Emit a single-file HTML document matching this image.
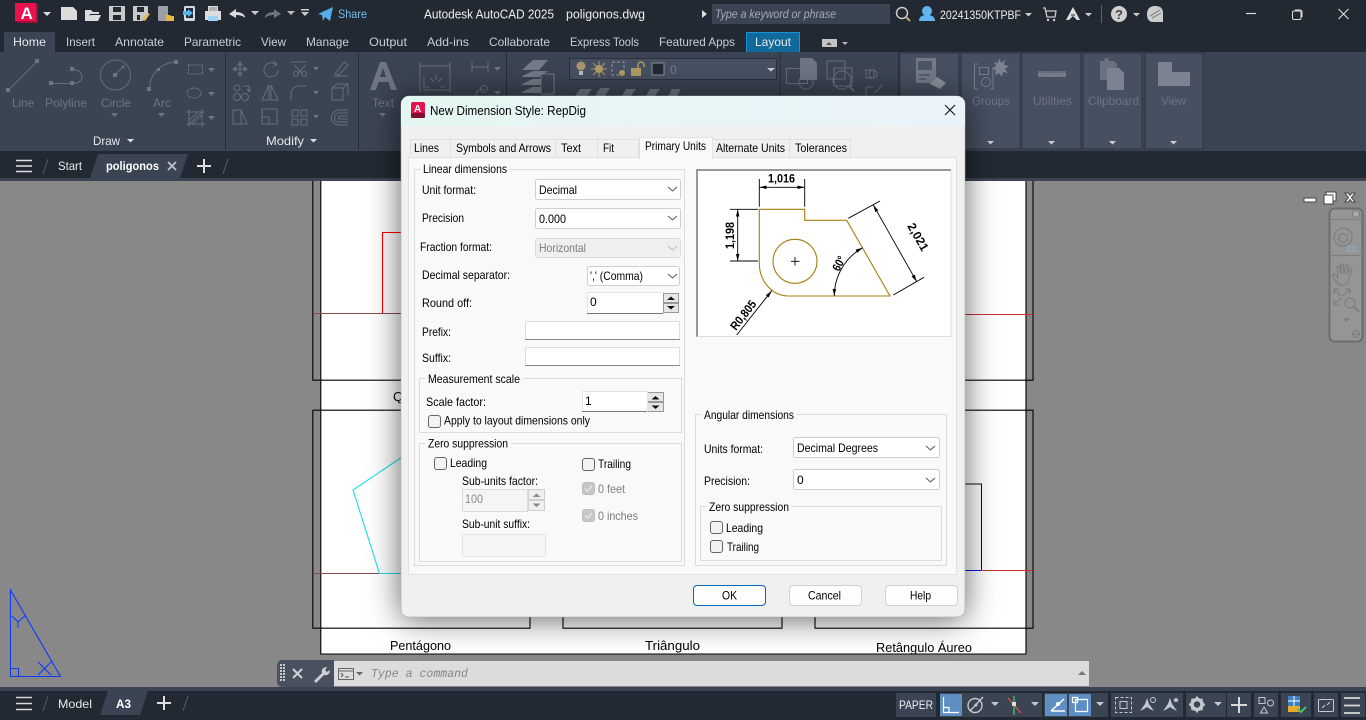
<!DOCTYPE html>
<html lang="en"><head><meta charset="utf-8"><title>AutoCAD</title>
<style>
html,body{margin:0;padding:0;width:1366px;height:720px;overflow:hidden;background:#888}
svg{display:block;position:absolute;left:0;top:0}
text{font-family:"Liberation Sans",sans-serif;font-size:12px;fill:#000}
.w{fill:#e6e8ea}.d{fill:#6d7482}.g{fill:#7d7d7d}.tb{fill:#c9ced6}
.c{fill:#fff;stroke:#cfcfcf;stroke-width:1}
.ck{fill:#f3f3f3;stroke:#666;stroke-width:1}
.ic{fill:none;stroke:#666e7c;stroke-width:1}
.if{fill:#6d7482;stroke:none}
.tp{fill:#dcdcdc;stroke:none}
.ln{fill:none;stroke:#000;stroke-width:1.100}
.sb{fill:#3b4453}
.si{fill:none;stroke:#c5c8cc;stroke-width:1.400}
</style></head><body>
<svg width="1366" height="720" viewBox="0 0 1366 720" xmlns="http://www.w3.org/2000/svg">
<defs>
<linearGradient id="tg" x1="0" x2="1" y1="0" y2="0"><stop offset="0" stop-color="#e4f6f1"/><stop offset="1" stop-color="#ebf3fa"/></linearGradient>
<filter id="sh" x="-20%" y="-20%" width="140%" height="140%"><feDropShadow dx="0" dy="2" stdDeviation="16" flood-color="#000" flood-opacity=".62"/></filter>
<clipPath id="dc"><rect x="401" y="96" width="564" height="521" rx="8"/></clipPath>
<marker id="ar" viewBox="0 0 8 4" refX="8" refY="2" markerWidth="8" markerHeight="4" orient="auto-start-reverse"><path d="M0 0L8 2L0 4Z" fill="#000"/></marker>
</defs>

<!-- canvas -->
<rect width="1366" height="720" fill="#888"/>
<rect x="321" y="178" width="705" height="476" fill="#fff"/>
<path class="ln" d="M320.800 178V654H1026V178"/>
<path class="ln" d="M312.800 178V380.200H1033V178"/>
<path class="ln" d="M312.800 410.200H1033V628.200H815V616M782 616V628.200H563V616M530 616V628.200H312.800V410"/>
<path d="M313 313.500H965" stroke="#8a4b4b" stroke-width="1" fill="none"/>
<path d="M965 314.500H1033" stroke="#d03030" stroke-width="1"/>
<path d="M313 573.500H379" stroke="#8a4b4b" stroke-width="1"/>
<path d="M382.500 313V232.500H420" stroke="#f00" stroke-width="1.100" fill="none"/>
<path d="M420 445L353 490L379.500 573.500H420" stroke="#1de0e8" stroke-width="1.100" fill="none"/>
<path d="M950 484H981.500V570.500H950" stroke="#111" fill="none"/>
<path d="M940 570.500H981" stroke="#0018e0"/>
<path d="M981 570.500H1033" stroke="#d03030"/>
<text x="393" y="401" style="font-size:13px">Q</text>
<text x="390" y="650" textLength="61" lengthAdjust="spacingAndGlyphs" style="font-size:13px">Pentágono</text>
<text x="645" y="650" textLength="55" lengthAdjust="spacingAndGlyphs" style="font-size:13px">Triângulo</text>
<text x="876" y="652" textLength="96" lengthAdjust="spacingAndGlyphs" style="font-size:13px">Retângulo Áureo</text>
<g stroke="#0a3cff" fill="none" stroke-width="1.100"><path d="M10.500 590V676.500H60.500Z"/><path d="M10.500 668.500H18.500V676.500M12 616L18 622L26 615M18 622V628M38 662L51 675M52 661L38 675"/></g>

<!-- viewport controls / navbar -->
<g fill="#fff" stroke="#444"><rect x="1304" y="198" width="12" height="4"/><rect x="1326" y="192" width="10" height="9"/><rect x="1324" y="195" width="9" height="9"/><path d="M1345 193h3l2 2.500 2-2.500h3l-3.500 4.500 3.500 4.500h-3l-2-2.500-2 2.500h-3l3.500-4.500z"/></g>
<rect x="1329.500" y="208.500" width="33" height="133" rx="5" fill="#959595" stroke="#6d6d6d" stroke-width="2"/>
<g fill="none" stroke="#7f7f7f" stroke-width="1.300"><path d="M1331 219.500H1361M1331 255.500H1361"/><circle cx="1343" cy="237" r="9"/><circle cx="1343" cy="238" r="4.500"/><circle cx="1356" cy="214" r="3.500" fill="#aaa"/>
<path d="M1340 285c-4-3-7-7-8-10l2-1 4 4-1-11 2-1 2 8 0-10h2l1 10 2-9h2l-1 10 3-7 2 1-3 10c-1 4-3 6-5 6z"/>
<path d="M1334 289l7 7M1334 289h5M1334 289v5M1350 289l-7 7M1350 289h-5M1350 289v5M1334 305l7-7M1334 305h5M1334 305v-5"/><circle cx="1350" cy="303" r="5"/><path d="M1354 307l5 5" stroke-width="2"/><circle cx="1356" cy="334" r="3.500"/><path d="M1353 334h6"/></g>
<path d="M1343 318h7l-3.500 4z" fill="#7f7f7f"/>
<text x="1346" y="252" style="font-size:9px;font-weight:bold;fill:#93a8c4">2D</text>

<!-- title bar and tabs -->
<rect width="1366" height="52" fill="#222933"/>
<path d="M16 4h22v19H18l-3-2z" fill="#a50e3c"/><rect x="15" y="3" width="21" height="18" fill="#e8124f"/>
<text x="20.500" y="19" style="font-size:17px;font-weight:bold;fill:#fff">A</text>
<path d="M43 12h8l-4 4z" fill="#ddd"/>
<path class="tp" d="M61 7h12l4 4v9H61z"/>
<path class="tp" d="M85 10h6l2 2h6v2h-9l-3 7h-2zM90 15h11l-3 6H86z"/>
<path class="tp" d="M109 6h16v15h-16zM113 7v5h8V7zM113 15v5h8v-5z" fill-rule="evenodd" style="fill:#c9c9c9"/>
<path class="tp" d="M133 6h15v9l-5 6h-10zM137 7v5h7V7zM137 15v5h3v-5z" fill-rule="evenodd" style="fill:#c9c9c9"/><path d="M142 19l6-6 2 1-5 7z" fill="#e6b85c"/>
<rect x="158" y="6" width="10" height="15" rx="1" fill="#9aa0a8"/><path d="M166 15h4l1 1h3v5h-8z" fill="#e9b84a"/>
<rect x="184" y="6" width="11" height="15" rx="1.500" fill="#d8d8d8"/><rect x="186" y="8" width="7" height="10" fill="#222933"/><path d="M183 11h5v-2l5 4-5 4v-2h-5z" fill="#55b4f0"/>
<path class="tp" d="M208 6h10v5h3l0 9h-3v-2h-10v2h-3v-9h3z"/><rect x="208" y="16" width="10" height="5" fill="#9fd3f5"/><rect x="209" y="7" width="8" height="4" fill="#222933" opacity=".25"/>
<path class="tp" d="M229 14l7-5v3c5 0 9 2 9 6-2-2-5-3-9-3v3z"/><path d="M252 12h8l-4 4z" fill="#ccc" transform="translate(-1 -1)"/>
<path d="M281 14l-7-5v3c-5 0-9 2-9 6 2-2 5-3 9-3v3z" fill="#6d7480"/><path d="M287 11h8l-4 4z" fill="#bbb"/>
<path d="M301 9h8v1.500h-8zM301 12h8l-4 4z" fill="#ccc"/>
<path d="M318 14L333 7l-3 14-5-4-2 4-1-6z" fill="#58aee8"/>
<text x="338" y="18" textLength="29" lengthAdjust="spacingAndGlyphs" style="fill:#78bdec">Share</text>
<text x="424" y="18.500" textLength="130" lengthAdjust="spacingAndGlyphs" style="font-size:13px;fill:#eee">Autodesk AutoCAD 2025</text>
<text x="566" y="18.500" textLength="79" lengthAdjust="spacingAndGlyphs" style="font-size:13px;fill:#eee">poligonos.dwg</text>
<path d="M702 10l5 4-5 4z" fill="#ddd"/>
<rect x="712" y="4" width="178" height="20" fill="#3b4453"/>
<text x="715" y="18" textLength="121" lengthAdjust="spacingAndGlyphs" style="font-style:italic;fill:#a6abb3">Type a keyword or phrase</text>
<circle cx="902" cy="13" r="5.500" fill="none" stroke="#ccc" stroke-width="1.500"/><path d="M906 17l4 4" stroke="#c9a66b" stroke-width="2"/>
<circle cx="927" cy="11" r="5" fill="#62b5ee"/><path d="M919 21c0-5 4-6 8-6s8 1 8 6z" fill="#62b5ee"/>
<text x="940" y="19" textLength="81" lengthAdjust="spacingAndGlyphs" style="fill:#eee">20241350KTPBF</text><path d="M1025 13h7l-3.500 3.500z" fill="#ccc"/>
<path d="M1043 8h2l2 9h8l1-6h-10" stroke="#ccc" stroke-width="1.300" fill="none"/><circle cx="1048" cy="20" r="1.200" fill="#ccc"/><circle cx="1054" cy="20" r="1.200" fill="#ccc"/>
<path d="M1073 7l7 13h-3l-4-4-4 4h-3z" fill="#ddd"/><path d="M1071 15h4" stroke="#222933"/><path d="M1085 13h7l-3.500 3.500z" fill="#ccc"/>
<rect x="1101" y="5" width="1" height="18" fill="#5b6370"/>
<circle cx="1119" cy="14" r="8" fill="#d0d0d0"/><text x="1115" y="19" style="font-size:13px;font-weight:bold;fill:#444">?</text><path d="M1133 13h7l-3.500 3.500z" fill="#ccc"/>
<path d="M1147 14c0-5 3-8 8-8s8 2 8 7v9h-10c-4 0-6-3-6-8z" fill="#ccc"/><path d="M1150 16l10-6M1152 18l9-5" stroke="#777"/>
<path d="M1246 13.500h10" stroke="#ddd" stroke-width="1.200"/>
<rect x="1292.500" y="11" width="8.500" height="8.500" rx="1.500" fill="none" stroke="#ddd"/><path d="M1295 10h5a2 2 0 0 1 2 2v5" fill="none" stroke="#ddd"/>
<path d="M1338.500 9l10 10M1348.500 9l-10 10" stroke="#ddd" stroke-width="1.100"/>

<rect x="4" y="32" width="51" height="20" fill="#3b4453"/>
<rect x="746.500" y="32.500" width="53" height="20" fill="#10699a" stroke="#1b92d2"/>
<g>
<text class="w" x="13" y="46" textLength="33" lengthAdjust="spacingAndGlyphs">Home</text>
<text class="tb" x="66" y="46" textLength="29" lengthAdjust="spacingAndGlyphs">Insert</text>
<text class="tb" x="115" y="46" textLength="49" lengthAdjust="spacingAndGlyphs">Annotate</text>
<text class="tb" x="184" y="46" textLength="57" lengthAdjust="spacingAndGlyphs">Parametric</text>
<text class="tb" x="261" y="46" textLength="25" lengthAdjust="spacingAndGlyphs">View</text>
<text class="tb" x="306" y="46" textLength="43" lengthAdjust="spacingAndGlyphs">Manage</text>
<text class="tb" x="369" y="46" textLength="38" lengthAdjust="spacingAndGlyphs">Output</text>
<text class="tb" x="427" y="46" textLength="42" lengthAdjust="spacingAndGlyphs">Add-ins</text>
<text class="tb" x="489" y="46" textLength="61" lengthAdjust="spacingAndGlyphs">Collaborate</text>
<text class="tb" x="570" y="46" textLength="69" lengthAdjust="spacingAndGlyphs">Express Tools</text>
<text class="tb" x="659" y="46" textLength="76" lengthAdjust="spacingAndGlyphs">Featured Apps</text>
<text class="w" x="755" y="46" textLength="36" lengthAdjust="spacingAndGlyphs">Layout</text>
</g>
<rect x="822" y="39" width="15" height="8" fill="#c4c4c4"/><path d="M826 45h6l-3-3z" fill="#555"/><path d="M842 42h6l-3 3z" fill="#bbb"/>

<!-- ribbon -->
<rect y="52" width="1366" height="99" fill="#3b4453"/>
<path d="M225.500 53V150M358.500 53V150M506.500 53V150M780 53V150M898.500 53V150" stroke="#262d38" stroke-width="1"/>
<g>
<rect x="900" y="53" width="59" height="96" fill="#465061" stroke="#2f3643"/><rect x="961" y="53" width="59" height="96" fill="#465061" stroke="#2f3643"/><rect x="1022" y="53" width="59" height="96" fill="#465061" stroke="#2f3643"/><rect x="1083" y="53" width="59" height="96" fill="#465061" stroke="#2f3643"/><rect x="1145" y="53" width="58" height="96" fill="#465061" stroke="#2f3643"/>
</g>
<g class="ic">
<path d="M8.500 90L37 61.500"/><path d="M52 83.500H72c8 0 10-4 10-7s-3-7-10-7"/><circle cx="115.500" cy="75" r="15"/><path d="M115 75l9-9M121 66h3v3"/><path d="M149.500 89c0-15 12-27 27-27"/>
<rect x="188.500" y="65" width="14" height="9" stroke-dasharray="3 1"/><ellipse cx="194" cy="93" rx="7" ry="5" stroke-dasharray="5 1"/><rect x="189" y="112" width="13" height="12"/><path d="M189 124l13-12M192 124l10-9M189 120l9-8M186 112h19M186 124h19M189 109v18M202 109v18"/>
<path d="M240 62v14M233 69h14M240 62l-2 3h4zM240 76l-2-3h4zM233 69l3-2v4zM247 69l-3-2v4z"/>
<path d="M276 65a7 7 0 1 0 2 5M273 61l4 3-4 3"/>
<path d="M291 62h16M294 65l9 9M306 65l-9 9"/><circle cx="296" cy="74" r="2.500"/><circle cx="304" cy="74" r="2.500"/>
<path d="M333 76h15M335 74l9-12 4 3-9 10z"/>
<circle cx="237" cy="88" r="3"/><path d="M243 86h6v5M247 89l2 3 2-3"/><circle cx="237" cy="97" r="3.500"/><circle cx="245" cy="97" r="3.500"/>
<path d="M269 85v15h-7zM271 85v15h7z"/>
<path d="M291 101v-7c0-5 4-8 8-8h7"/>
<path d="M332 88h11v12h-11zM337 84h11v11M332 88l5-4M343 88l5-4"/>
<path d="M233 110h8l6 14h-14zM241 110v14"/><rect x="262" y="109" width="15" height="15"/><rect x="262" y="117" width="7" height="7"/>
<rect x="292" y="110" width="6" height="6"/><rect x="301" y="110" width="6" height="6"/><rect x="292" y="119" width="6" height="6"/><rect x="301" y="119" width="6" height="6"/>
<path d="M348 113h-9a4.500 4.500 0 0 0 0 9h9M348 110h-9a7.500 7.500 0 0 0 0 15h9M348 116h-8a1.500 1.500 0 0 0 0 3h8"/>
<path d="M420 62V92M450 62V92M420 66H450M424 77v13h26V77M434 82l-4-4M436 80v-5M438 82l4-4M430 87h-5M445 87h-5"/>
<path d="M472 62V73M488 62V73M472 67H488M476 96a6 6 0 0 1 9-6"/><circle cx="484" cy="89" r="3.500"/>
<path d="M786.500 68.500h21v15h-21z"/><circle cx="806" cy="82" r="7"/>
<rect x="827" y="61" width="18" height="18"/><rect x="834" y="68" width="18" height="18"/><circle cx="842" cy="80" r="9"/><path d="M849 86l5 5" stroke-width="2"/>
<path d="M866 70h8v8h-8z"/><circle cx="873" cy="74" r="4"/><path d="M866 95v-8h8M875 93l7-8"/>
</g>
<g class="if">
<rect x="6" y="88" width="4" height="4"/><rect x="35" y="59" width="4" height="4"/><rect x="49" y="81" width="4" height="4"/><rect x="70" y="81" width="4" height="4"/><rect x="70" y="67" width="4" height="4"/><rect x="113" y="73" width="4" height="4"/><rect x="147" y="87" width="4" height="4"/><rect x="174" y="60" width="4" height="4"/><rect x="157" y="68" width="3" height="3"/>
<path d="M208 68h7l-3.500 4zM208 92h7l-3.500 4zM208 116h7l-3.500 4zM313 67h6l-3 3.500zM313 91h6l-3 3.500zM313 115h6l-3 3.500zM494 67h7l-3.500 4zM494 91h7l-3.500 4z"/>
<path d="M111 113h7l-3.500 4zM158 113h7l-3.500 4zM379 113h7l-3.500 4z"/>
<path d="M370 90h6l2.500-8h10l2.500 8h6L386 62h-6zM380 77h6l-3-9z" fill-rule="evenodd"/>
<path d="M522 70l11-10h15l-9 10zM522 76l11-5h15l-9 6H522zM522 84l11-5h15l-9 6H522zM522 92l11-5h10v6H522z" style="fill:#747a86"/>
<rect x="541" y="74" width="13" height="20" rx="1" style="fill:#3b4453;stroke:#747a86"/>
<path d="M575 96l5-7h12l-5 7zM595 96l5-8h10l-5 8zM622 96l4-7h10l-5 7zM646 96l4-7h10l-5 7zM668 96l4-7h9l-4 7z"/>
<path d="M800 58h12l5 5v17h-17z"/>
<path d="M916 58h20v25h-20z" style="fill:#737a87"/><path d="M918 61h14v9h-14z" style="fill:#4c5565"/><path d="M930 84l7-7 9 6-6 6z" style="fill:#8b909a"/>
<path d="M919 75h11M919 79h7" style="stroke:#3a4352"/>
<path d="M1038 71h28v6h-28z" style="fill:#747a86"/>
<path d="M1100 61h4l1-3h3l1 3h5l3 3v16h-17z" style="fill:#6a717e"/><path d="M1107 68h12l5 5v17h-17z" style="fill:#7c828f"/>
<path d="M1158 62h14v10h18v14h-32z" style="fill:#7c828f"/>
</g>
<path d="M1040 71v2M1043 71v2M1046 71v2M1049 71v2M1052 71v2M1055 71v2M1058 71v2M1061 71v2M1064 71v2" stroke="#465061"/>
<g fill="none" stroke="#747a86" stroke-width="1"><path d="M978 64h-3.500v25h3.500M993 67v22h-3"/><rect x="979.500" y="67.500" width="9" height="7"/><circle cx="986" cy="82" r="4.500"/></g>
<path d="M999 58l2 5 4-3-1 5 5 1-4 3 3 4-5-1-1 5-3-4-4 2 1-5-4-1 4-3-2-4 4 1z" fill="#7c828f"/>
<g>
<text class="d" x="12" y="107" textLength="22" lengthAdjust="spacingAndGlyphs">Line</text>
<text class="d" x="45" y="107" textLength="42" lengthAdjust="spacingAndGlyphs">Polyline</text>
<text class="d" x="101" y="107" textLength="30" lengthAdjust="spacingAndGlyphs">Circle</text>
<text class="d" x="153" y="107" textLength="18" lengthAdjust="spacingAndGlyphs">Arc</text>
<text class="d" x="372" y="107" textLength="22" lengthAdjust="spacingAndGlyphs">Text</text>
<text class="d" x="972" y="105" textLength="38" lengthAdjust="spacingAndGlyphs">Groups</text>
<text class="d" x="1033" y="105" textLength="39" lengthAdjust="spacingAndGlyphs">Utilities</text>
<text class="d" x="1088" y="105" textLength="51" lengthAdjust="spacingAndGlyphs">Clipboard</text>
<text class="d" x="1161" y="105" textLength="25" lengthAdjust="spacingAndGlyphs">View</text>
<text class="w" x="93" y="145" textLength="27" lengthAdjust="spacingAndGlyphs">Draw</text>
<text class="w" x="266" y="145" textLength="38" lengthAdjust="spacingAndGlyphs">Modify</text>
</g>
<path d="M127 139h7l-3.500 3.500zM310 139h7l-3.500 3.500z" fill="#ddd"/>
<path d="M987 141h7l-3.500 3.500zM1048 141h7l-3.500 3.500zM1109 141h7l-3.500 3.500zM1170 141h7l-3.500 3.500z" fill="#ccc"/>
<rect x="569.500" y="58.500" width="207" height="21" fill="#465061" stroke="#2b313c"/>
<circle cx="581" cy="66" r="4.500" fill="#a8956f"/><rect x="579" y="71" width="4" height="4" fill="#bbb"/>
<circle cx="599" cy="69" r="4" fill="#b09a64"/><path d="M599 61v16M591 69h16M593 63l12 12M605 63l-12 12" stroke="#b09a64"/>
<rect x="612" y="62" width="12" height="13" fill="none" stroke="#999" stroke-dasharray="3 2"/><circle cx="622" cy="73" r="3" fill="#b09a64"/>
<rect x="631" y="68" width="10" height="8" fill="#b09a64"/><path d="M638 68v-3a3 3 0 0 1 6 0v2" fill="none" stroke="#b09a64" stroke-width="1.500"/>
<rect x="652" y="63" width="12" height="12" fill="#222933" stroke="#8b909a"/>
<text x="670" y="74" style="fill:#6e7d90">0</text>
<path d="M767 68h8l-4 3.500z" fill="#ccc"/>

<!-- file tabs -->
<rect y="151" width="1366" height="27" fill="#222933"/>
<rect y="178" width="1366" height="3" fill="#3b4453"/>
<path d="M16 160.500h16M16 166h16M16 171.500h16" stroke="#e0e0e0" stroke-width="1.600"/>
<path d="M48 159l-5 15" stroke="#555c68"/>
<text class="w" x="58" y="170" textLength="24" lengthAdjust="spacingAndGlyphs">Start</text>
<path d="M90 178l8-24h90l-8 24z" fill="#3b4453"/>
<text x="106" y="170" textLength="53" lengthAdjust="spacingAndGlyphs" style="fill:#fff;font-weight:bold">poligonos</text>
<path d="M168 162l8 8M176 162l-8 8" stroke="#c0c4ca" stroke-width="1.800"/>
<path d="M204 159v14M197 166h14" stroke="#e0e0e0" stroke-width="2"/>
<path d="M228 159l-5 15" stroke="#555c68"/>

<!-- command line -->
<path d="M282 660h52v27h-52a5 5 0 0 1-5-5v-17a5 5 0 0 1 5-5z" fill="#4a515e"/>
<rect x="334" y="661" width="755" height="25" fill="#dcdcdc"/>
<path d="M281 664v18M284 664v18" stroke="#c7c9cc" stroke-width="2" stroke-dasharray="2 1"/>
<path d="M293 669l9 9M302 669l-9 9" stroke="#cfd1d4" stroke-width="2"/>
<path d="M314 681l8-8c-1-3 1-6 5-6l-2 3 2 2 3-2c0 4-3 6-6 5l-8 8z" fill="#cfd1d4"/>
<rect x="338.500" y="668.500" width="15" height="11" fill="none" stroke="#666"/><path d="M339 671h14" stroke="#666"/><path d="M341 673l2 2-2 2M345 677h4" stroke="#555" fill="none"/><path d="M356 672h7l-3.500 3.500z" fill="#666"/>
<text x="371" y="677" textLength="97" lengthAdjust="spacingAndGlyphs" style="font-family:'Liberation Mono',monospace;font-style:italic;fill:#858585">Type a command</text>
<path d="M1078 675h8l-4-4z" fill="#777"/>

<!-- status bar -->
<rect y="687" width="1366" height="4" fill="#3b4453"/>
<rect y="691" width="1366" height="29" fill="#222933"/>
<path d="M16 697.500h16M16 703.500h16M16 709.500h16" stroke="#d8d8d8" stroke-width="1.600"/>
<path d="M48 696l-5 15" stroke="#555c68"/>
<text class="w" x="58" y="708" textLength="34" lengthAdjust="spacingAndGlyphs">Model</text>
<path d="M100 715l8-24h40l-8 24z" fill="#3b4453"/>
<text x="116" y="708" textLength="15" lengthAdjust="spacingAndGlyphs" style="fill:#fff;font-weight:bold">A3</text>
<path d="M164 696v14M157 703h14" stroke="#e0e0e0" stroke-width="2"/>
<path d="M188 696l-5 15" stroke="#555c68"/>
<g class="sb"><rect x="896" y="693" width="40" height="24"/><rect x="940" y="693" width="102" height="24"/><rect x="1044" y="693" width="64" height="24"/><rect x="1111" y="693" width="72" height="24"/><rect x="1186" y="693" width="40" height="24"/><rect x="1227" y="693" width="24" height="24"/><rect x="1254" y="693" width="24" height="24"/><rect x="1281" y="693" width="30" height="24"/><rect x="1314" y="693" width="24" height="24"/><rect x="1341" y="693" width="24" height="24"/></g>
<rect x="940" y="694" width="22" height="22" fill="#5f8fc2"/><rect x="1045" y="694" width="22" height="22" fill="#5f8fc2"/><rect x="1069" y="694" width="22" height="22" fill="#5f8fc2"/>
<text x="899" y="709" textLength="34" lengthAdjust="spacingAndGlyphs" style="fill:#eee">PAPER</text>
<path d="M943.500 697V712.500H959M943.500 707.500H949V712.500" fill="none" stroke="#fff" stroke-width="1.200"/>
<circle cx="975" cy="705.500" r="7" class="si"/><path d="M970 711l13-14" class="si"/><circle cx="976" cy="705" r="1.500" fill="#c5c8cc"/>
<path d="M1014 696v19" stroke="#4cc06a" stroke-width="1.300"/><path d="M1008 698l13 15" stroke="#d9534f" stroke-width="1.300"/><rect x="1012" y="702" width="4" height="4" fill="#ddd"/>
<path d="M1051 711h14M1051 711l13-12" fill="none" stroke="#fff" stroke-width="1.500"/><circle cx="1058" cy="704" r="2" fill="#fff"/>
<path d="M1075.500 699.500h12v12h-12zM1072.500 697.500h5v5h-5z" fill="none" stroke="#fff" stroke-width="1.200"/>
<path d="M991 702h8l-4 4zM1031 702h8l-4 4zM1096 702h8l-4 4zM1214 702h8l-4 4z" fill="#c5c8cc"/>
<rect x="1115.500" y="697.500" width="16" height="15" fill="none" stroke="#c5c8cc" stroke-dasharray="3 2"/><rect x="1120" y="701.500" width="7" height="7" fill="none" stroke="#c5c8cc"/>
<path d="M1147 698l2 6 5 7-4-2-3-2-3 2-4 2 5-7z" fill="#c5c8cc"/><circle cx="1153" cy="700" r="2.500" fill="none" stroke="#c5c8cc"/>
<path d="M1170 698l2 6 5 7-4-2-3-2-3 2-4 2 5-7z" fill="#c5c8cc"/><path d="M1176 697l1 2 2 0-1.500 1.500.5 2-2-1-2 1 .5-2-1.500-1.500 2 0z" fill="#c5c8cc"/>
<circle cx="1197" cy="704.500" r="5" fill="none" stroke="#c5c8cc" stroke-width="3.500"/><path d="M1197 696.500v16M1189 704.500h16M1191.500 699l11 11M1202.500 699l-11 11" stroke="#c5c8cc" stroke-width="2" stroke-dasharray="2 12.500"/>
<path d="M1239 697v16M1231 705h16" stroke="#d8d8d8" stroke-width="2"/>
<rect x="1259" y="697.500" width="6" height="6" fill="none" stroke="#c5c8cc"/><circle cx="1270.500" cy="703" r="3" fill="none" stroke="#c5c8cc"/><path d="M1264 707l3.500 6h-7z" fill="none" stroke="#c5c8cc"/>
<rect x="1288" y="696" width="12" height="10" fill="#3d7fc4"/><rect x="1288" y="706" width="12" height="6" fill="#e8ac2c"/><path d="M1294 696v10M1288 701h12" stroke="#fff"/><path d="M1298 709l3 3 5-5" stroke="#4cbf6b" stroke-width="2" fill="none"/>
<rect x="1318.500" y="699.500" width="15" height="12" rx="1" fill="none" stroke="#c5c8cc"/><path d="M1322 708l3-3M1330 702l-3 3" stroke="#c5c8cc"/>
<path d="M1344 698h16M1344 705.500h16M1344 713h16" stroke="#d8d8d8" stroke-width="1.800"/>

<!-- dialog -->
<rect x="401" y="96" width="564" height="521" rx="8" fill="#f0f0f0" stroke="#9a9a9a" stroke-width=".5" filter="url(#sh)"/>
<g clip-path="url(#dc)"><rect x="401" y="96" width="564" height="30" fill="url(#tg)"/></g>
<rect x="411" y="102" width="14" height="16" rx="2" fill="#e8124f"/><rect x="411" y="113" width="14" height="5" rx="1" fill="#7d1230"/>
<text x="414" y="112" style="font-size:10px;font-weight:bold;fill:#fff">A</text>
<text x="430" y="115" textLength="156" lengthAdjust="spacingAndGlyphs" style="font-size:13px">New Dimension Style: RepDig</text>
<path d="M945 105l10 10M955 105l-10 10" stroke="#111" stroke-width="1.100"/>

<!-- tabs -->
<rect x="408.500" y="157.500" width="548" height="417" fill="#f9f9f9" stroke="#e2e2e2"/>
<g fill="#f0f0f0" stroke="#e0e0e0"><rect x="410.500" y="139.500" width="40" height="18"/><rect x="450.500" y="139.500" width="105" height="18"/><rect x="555.500" y="139.500" width="42" height="18"/><rect x="597.500" y="139.500" width="41" height="18"/><rect x="712.500" y="139.500" width="77" height="18"/><rect x="789.500" y="139.500" width="61" height="18"/></g>
<rect x="639.500" y="137.500" width="73" height="21" fill="#f9f9f9" stroke="#e2e2e2"/><rect x="640" y="157" width="72" height="2" fill="#f9f9f9"/>
<text x="414" y="152" textLength="25" lengthAdjust="spacingAndGlyphs">Lines</text>
<text x="456" y="152" textLength="95" lengthAdjust="spacingAndGlyphs">Symbols and Arrows</text>
<text x="561" y="152" textLength="20" lengthAdjust="spacingAndGlyphs">Text</text>
<text x="603" y="152" textLength="11" lengthAdjust="spacingAndGlyphs">Fit</text>
<text x="645" y="150" textLength="61" lengthAdjust="spacingAndGlyphs">Primary Units</text>
<text x="716" y="152" textLength="69" lengthAdjust="spacingAndGlyphs">Alternate Units</text>
<text x="795" y="152" textLength="52" lengthAdjust="spacingAndGlyphs">Tolerances</text>

<!-- groups -->
<g fill="none" stroke="#dcdcdc"><rect x="414.500" y="169.500" width="270" height="396"/><rect x="419.500" y="378.500" width="262" height="54"/><rect x="419.500" y="443.500" width="262" height="118"/><rect x="695.500" y="414.500" width="251" height="151"/><rect x="700.500" y="506.500" width="241" height="54"/></g>
<g fill="#f9f9f9"><rect x="421" y="165" width="88" height="8"/><rect x="425" y="374" width="98" height="8"/><rect x="425" y="439" width="86" height="8"/><rect x="701" y="410" width="96" height="8"/><rect x="706" y="502" width="86" height="8"/></g>
<text x="423" y="173" textLength="84" lengthAdjust="spacingAndGlyphs">Linear dimensions</text>
<text x="422" y="194" textLength="54" lengthAdjust="spacingAndGlyphs">Unit format:</text>
<text x="422" y="222" textLength="42" lengthAdjust="spacingAndGlyphs">Precision</text>
<text x="420" y="251" textLength="72" lengthAdjust="spacingAndGlyphs">Fraction format:</text>
<text x="422" y="279" textLength="88" lengthAdjust="spacingAndGlyphs">Decimal separator:</text>
<text x="422" y="307" textLength="50" lengthAdjust="spacingAndGlyphs">Round off:</text>
<text x="422" y="336" textLength="29" lengthAdjust="spacingAndGlyphs">Prefix:</text>
<text x="422" y="362" textLength="29" lengthAdjust="spacingAndGlyphs">Suffix:</text>
<rect class="c" x="535.500" y="179.500" width="145" height="20" rx="2"/><rect class="c" x="535.500" y="208.500" width="145" height="20" rx="2"/><rect x="535.500" y="238.500" width="145" height="19" rx="2" fill="#efefef" stroke="#dcdcdc"/><rect class="c" x="587.500" y="266.500" width="92" height="19" rx="2"/>
<path d="M668 187l4.500 4 4.500-4M668 216l4.500 4 4.500-4M668 274l4.500 4 4.500-4" fill="none" stroke="#555"/><path d="M668 246l4.500 4 4.500-4" fill="none" stroke="#bbb"/>
<text x="539" y="194" textLength="38" lengthAdjust="spacingAndGlyphs">Decimal</text>
<text x="539" y="223" textLength="27" lengthAdjust="spacingAndGlyphs">0.000</text>
<text x="539" y="252" textLength="47" lengthAdjust="spacingAndGlyphs" class="g">Horizontal</text>
<text x="590" y="280" textLength="53" lengthAdjust="spacingAndGlyphs">',' (Comma)</text>
<!-- edits -->
<rect x="587.500" y="292.500" width="76" height="21" fill="#fff" stroke="#e4e4e4"/><path d="M587 313.500H663" stroke="#777"/>
<text x="590" y="306">0</text>
<g fill="#e6e6e6" stroke="#999"><rect x="663.500" y="293.500" width="15" height="9"/><rect x="663.500" y="303.500" width="15" height="9"/><rect x="647.500" y="392.500" width="16" height="9"/><rect x="647.500" y="402.500" width="16" height="9"/></g>
<path d="M667 300h8l-4-3.500zM667 306h8l-4 3.500zM651.500 399.500h8l-4-3.500zM651.500 405.500h8l-4 3.500z" fill="#111"/>
<rect x="525.500" y="321.500" width="154" height="18" fill="#fff" stroke="#dedede"/><path d="M525 339.500H680" stroke="#888"/>
<rect x="525.500" y="347.500" width="154" height="18" fill="#fff" stroke="#dedede"/><path d="M525 365.500H680" stroke="#888"/>
<text x="428" y="383" textLength="92" lengthAdjust="spacingAndGlyphs">Measurement scale</text>
<text x="426" y="406" textLength="60" lengthAdjust="spacingAndGlyphs">Scale factor:</text>
<rect x="582.500" y="391.500" width="65" height="20" fill="#fff" stroke="#e4e4e4"/><path d="M582 411.500H647" stroke="#777"/>
<text x="585" y="405">1</text>
<rect class="ck" x="428.500" y="415.500" width="12" height="12" rx="2.500"/>
<text x="444" y="424.500" textLength="146" lengthAdjust="spacingAndGlyphs">Apply to layout dimensions only</text>
<text x="428" y="447.500" textLength="80" lengthAdjust="spacingAndGlyphs">Zero suppression</text>
<rect class="ck" x="434.500" y="457.500" width="12" height="12" rx="2.500"/>
<text x="450" y="467" textLength="37" lengthAdjust="spacingAndGlyphs">Leading</text>
<rect class="ck" x="582.500" y="458.500" width="12" height="12" rx="2.500"/>
<text x="598" y="468" textLength="33" lengthAdjust="spacingAndGlyphs">Trailing</text>
<text x="462" y="485" textLength="76" lengthAdjust="spacingAndGlyphs">Sub-units factor:</text>
<rect x="462.500" y="489.500" width="65" height="22" fill="#f5f5f5" stroke="#dcdcdc"/>
<text x="465" y="503" textLength="18" lengthAdjust="spacingAndGlyphs" style="fill:#8a8a8a">100</text>
<g fill="#efefef" stroke="#cfcfcf"><rect x="528.500" y="489.500" width="16" height="10"/><rect x="528.500" y="500.500" width="16" height="10"/></g>
<path d="M532.500 497h8l-4-3.500zM532.500 503.500h8l-4 3.500z" fill="#8a8a8a"/>
<text x="462" y="528" textLength="68" lengthAdjust="spacingAndGlyphs">Sub-unit suffix:</text>
<rect x="462.500" y="534.500" width="83" height="22" rx="1" fill="#f5f5f5" stroke="#e6e6e6"/>
<rect x="582.500" y="482.500" width="12" height="12" rx="2.500" fill="#c6c6c6" stroke="#bdbdbd"/><path d="M585 488.500l2.500 2.500 4.500-5" stroke="#f2f2f2" fill="none"/>
<text x="598" y="493" textLength="27" lengthAdjust="spacingAndGlyphs" class="g">0 feet</text>
<rect x="582.500" y="509.500" width="12" height="12" rx="2.500" fill="#c6c6c6" stroke="#bdbdbd"/><path d="M585 515.500l2.500 2.500 4.500-5" stroke="#f2f2f2" fill="none"/>
<text x="598" y="520" textLength="40" lengthAdjust="spacingAndGlyphs" class="g">0 inches</text>

<!-- preview -->
<rect x="697" y="170" width="254" height="166.500" fill="#fff"/>
<path d="M697 337V170H951" fill="none" stroke="#777" stroke-width="1.500"/><path d="M951 170.500V336.500H697" fill="none" stroke="#dcdcdc"/>
<g fill="none" stroke="#a77f10" stroke-width="1.100"><path d="M759.300 209.300H804.700V220.300H846.700L890 296H788.300C772 296 759.300 281 759.300 263.300Z"/><circle cx="795" cy="261.300" r="22"/></g>
<g fill="none" stroke="#000" stroke-width=".9">
<path d="M795 257v8.500M791 261.300h8.500"/>
<path d="M759.300 179V206.700M804.700 179V206.700"/><path d="M759.500 187.300H804.500" marker-start="url(#ar)" marker-end="url(#ar)"/>
<path d="M730 209.300H758M730 261H758"/><path d="M737.700 209.500V261" marker-start="url(#ar)" marker-end="url(#ar)"/>
<path d="M848.300 218.300L880 201M893.300 295L924 277.300"/><path d="M873.300 205L916.700 281.700" marker-start="url(#ar)" marker-end="url(#ar)"/>
<path d="M862.700 247.700A55.700 55.700 0 0 0 834.300 296" marker-start="url(#ar)" marker-end="url(#ar)"/>
<path d="M736.700 335L771.700 290.700" marker-end="url(#ar)"/>
</g>
<text x="768" y="182.500" textLength="27" lengthAdjust="spacingAndGlyphs" style="font-weight:bold">1,016</text>
<text transform="translate(734 249) rotate(-90)" textLength="27" lengthAdjust="spacingAndGlyphs" style="font-weight:bold">1,198</text>
<text transform="translate(907 226) rotate(60)" textLength="30" lengthAdjust="spacingAndGlyphs" style="font-weight:bold">2,021</text>
<text transform="translate(839 272) rotate(-62)" textLength="15" lengthAdjust="spacingAndGlyphs" style="font-weight:bold">60°</text>
<text transform="translate(736 331) rotate(-52)" textLength="34" lengthAdjust="spacingAndGlyphs" style="font-weight:bold">R0,805</text>

<!-- angular -->
<text x="704" y="419" textLength="90" lengthAdjust="spacingAndGlyphs">Angular dimensions</text>
<text x="704" y="453" textLength="59" lengthAdjust="spacingAndGlyphs">Units format:</text>
<text x="704" y="485" textLength="46" lengthAdjust="spacingAndGlyphs">Precision:</text>
<rect class="c" x="793.500" y="437.500" width="146" height="20" rx="2"/><rect class="c" x="793.500" y="469.500" width="146" height="20" rx="2"/>
<path d="M926 446l4.500 4 4.500-4M926 478l4.500 4 4.500-4" fill="none" stroke="#555"/>
<text x="797" y="452" textLength="81" lengthAdjust="spacingAndGlyphs">Decimal Degrees</text>
<text x="797" y="484">0</text>
<text x="709" y="511" textLength="80" lengthAdjust="spacingAndGlyphs">Zero suppression</text>
<rect class="ck" x="710.500" y="521.500" width="12" height="12" rx="2.500"/>
<text x="726" y="532" textLength="37" lengthAdjust="spacingAndGlyphs">Leading</text>
<rect class="ck" x="710.500" y="540.500" width="12" height="12" rx="2.500"/>
<text x="727" y="551" textLength="32" lengthAdjust="spacingAndGlyphs">Trailing</text>

<!-- buttons -->
<rect x="693.500" y="585.500" width="72" height="20" rx="3.500" fill="#fdfdfd" stroke="#0067c0"/>
<rect x="789.500" y="585.500" width="72" height="20" rx="3.500" fill="#fdfdfd" stroke="#d0d0d0"/>
<rect x="885.500" y="585.500" width="72" height="20" rx="3.500" fill="#fdfdfd" stroke="#d0d0d0"/>
<text x="722" y="599.500" textLength="15" lengthAdjust="spacingAndGlyphs">OK</text>
<text x="808" y="599.500" textLength="33" lengthAdjust="spacingAndGlyphs">Cancel</text>
<text x="910" y="599.500" textLength="21" lengthAdjust="spacingAndGlyphs">Help</text>
</svg>
</body></html>
